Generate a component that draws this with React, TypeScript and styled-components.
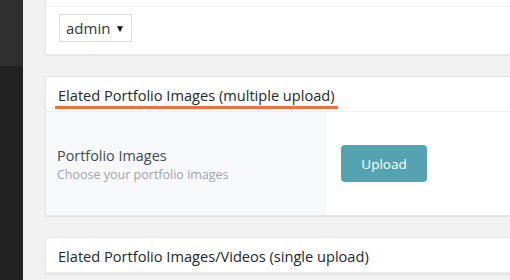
import React from "react";
import styled, { createGlobalStyle } from "styled-components";

const Global = createGlobalStyle`
  html, body { margin: 0; padding: 0; background: #f1f1f1; }
  body { font-family: "Open Sans", "Liberation Sans", sans-serif; overflow: hidden; }
`;

const Page = styled.div`
  display: grid;
  grid-template-columns: 23px 1fr;
  width: 510px;
  height: 280px;
  overflow: hidden;
`;

const Sidebar = styled.div`
  display: flex;
  flex-direction: column;
  background: #222;
`;

const SidebarTop = styled.div`
  height: 66px;
  background: #2f2f2f;
`;

const Main = styled.div`
  display: flex;
  flex-direction: column;
  gap: 21px;
  padding-left: 22px;
  width: 520px;
`;

const Card = styled.div<{ $top?: boolean }>`
  background: #fff;
  border: 1px solid #e5e5e5;
  border-top: ${(p) => (p.$top ? "none" : "1px solid #e5e5e5")};
  box-shadow: 0 1px 1px rgba(0, 0, 0, 0.05);
`;

const CardTopStrip = styled.div`
  height: 6px;
  border-bottom: 1px solid #eee;
`;

const SelectRow = styled.div`
  padding: 7px 13px 12px;
`;

const Select = styled.div`
  display: inline-flex;
  align-items: center;
  justify-content: space-between;
  box-sizing: border-box;
  width: 73px;
  height: 28px;
  border: 1px solid #ddd;
  padding: 0 6px 0 6px;
  font-size: 15px;
  color: #32373c;
`;

const Caret = styled.span`
  font-size: 10px;
  color: #111;
`;

const CardHeader = styled.div`
  height: 35px;
  border-bottom: 1px solid #eee;
  padding: 0 9px;
  box-sizing: border-box;
  display: flex;
  align-items: flex-start;
`;

const Title = styled.h3<{ $underline?: boolean }>`
  margin: 0;
  padding: 8px 3px 0;
  font-size: 14.6px;
  font-weight: 500;
  color: #23282d;
  line-height: 20px;
  height: ${(p) => (p.$underline ? "21px" : "auto")};
  border-bottom: ${(p) => (p.$underline ? "3px solid #f46e3f" : "none")};
`;

const FieldRow = styled.div`
  display: grid;
  grid-template-columns: 280px 1fr;
  height: 103px;
`;

const FieldLabel = styled.div`
  background: #f7f8fa;
  display: flex;
  flex-direction: column;
  justify-content: center;
  padding: 0 11px;
  padding-top: 2px;
`;

const LabelTitle = styled.div`
  font-size: 14.4px;
  font-weight: 500;
  color: #3d4a57;
  line-height: 20px;
`;

const LabelDesc = styled.div`
  font-size: 12.5px;
  color: #9ea4ac;
  line-height: 18px;
`;

const FieldControl = styled.div`
  display: flex;
  align-items: center;
  padding-left: 15px;
`;

const Button = styled.button`
  width: 86px;
  height: 37px;
  border: none;
  border-radius: 4px;
  background: #55a3b0;
  color: #fff;
  font-family: inherit;
  font-size: 13.5px;
  padding: 0;
`;

export default function App() {
  return (
    <>
      <Global />
      <Page>
        <Sidebar>
          <SidebarTop />
        </Sidebar>
        <Main>
          <Card $top>
            <CardTopStrip />
            <SelectRow>
              <Select>
                admin <Caret>▼</Caret>
              </Select>
            </SelectRow>
          </Card>
          <Card>
            <CardHeader>
              <Title $underline>Elated Portfolio Images (multiple upload)</Title>
            </CardHeader>
            <FieldRow>
              <FieldLabel>
                <LabelTitle>Portfolio Images</LabelTitle>
                <LabelDesc>Choose your portfolio images</LabelDesc>
              </FieldLabel>
              <FieldControl>
                <Button>Upload</Button>
              </FieldControl>
            </FieldRow>
          </Card>
          <Card>
            <CardHeader>
              <Title>Elated Portfolio Images/Videos (single upload)</Title>
            </CardHeader>
          </Card>
        </Main>
      </Page>
    </>
  );
}
